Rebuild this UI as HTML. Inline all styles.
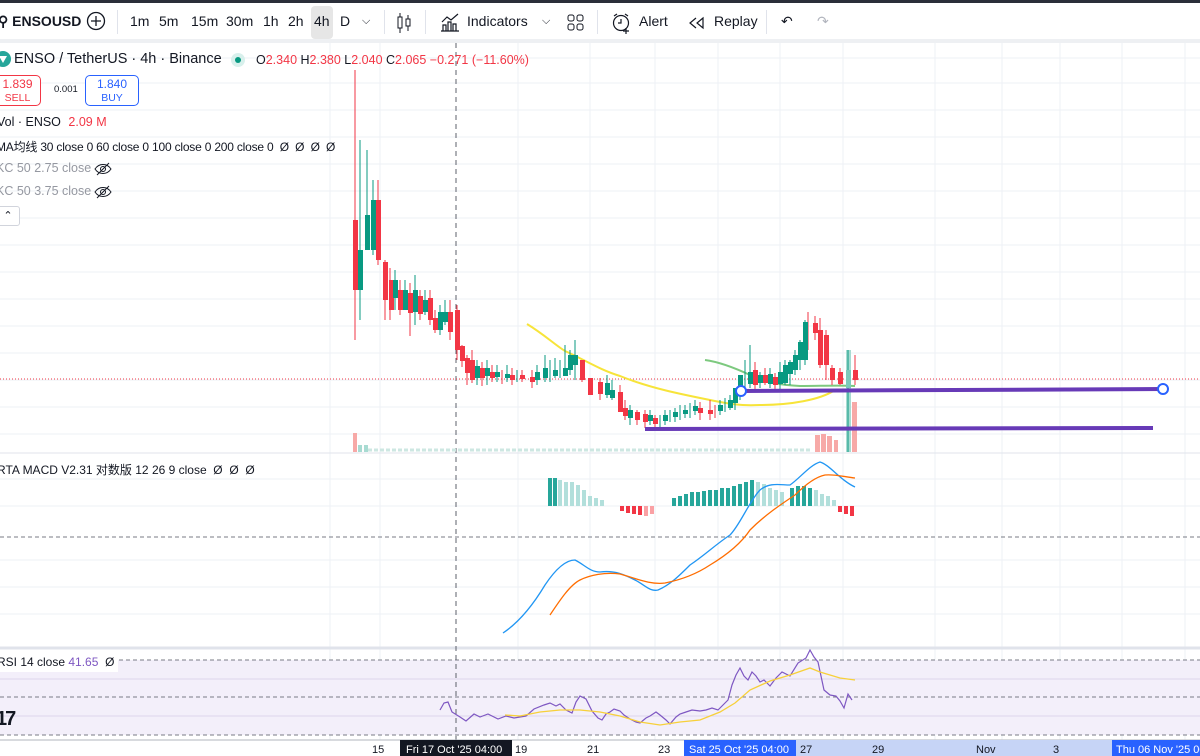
<!DOCTYPE html>
<html><head><meta charset="utf-8">
<style>
*{margin:0;padding:0;box-sizing:border-box}
body{width:1200px;height:756px;overflow:hidden;background:#fff;font-family:"Liberation Sans","Noto Sans CJK SC",sans-serif;color:#131722;position:relative}
.tb{position:absolute;left:0;top:0;width:1200px;height:39px;border-top:3px solid #2a2e39;background:#fff;font-size:14px}
.tb span{position:absolute;top:10px}
.sep{position:absolute;top:7px;width:1px;height:24px;background:#e0e3eb}
.gap{position:absolute;top:39px;left:0;width:1200px;height:4px;background:#eef0f3}
.t{position:absolute;font-size:13px;white-space:nowrap}
.g{color:#9598a1}
</style></head><body>
<div class="tb">
<span style="left:-2px;font-weight:bold">⚲ ENSOUSD</span>
<svg style="position:absolute;left:86px;top:8px" width="20" height="20"><circle cx="10" cy="10" r="8.5" fill="none" stroke="#131722" stroke-width="1.3"/><path d="M10 5v10M5 10h10" stroke="#131722" stroke-width="1.3"/></svg>
<div class="sep" style="left:117px"></div>
<span style="left:130px">1m</span><span style="left:159px">5m</span><span style="left:191px">15m</span><span style="left:226px">30m</span><span style="left:263px">1h</span><span style="left:288px">2h</span>
<div style="position:absolute;left:311px;top:3px;width:22px;height:33px;background:#e6e6e6;border-radius:4px"></div>
<span style="left:314px">4h</span><span style="left:340px">D</span><span style="left:362px;font-size:11px;top:12px">⌵</span>
<div class="sep" style="left:384px"></div>
<svg style="position:absolute;left:395px;top:9px" width="18" height="22"><rect x="3" y="5" width="4" height="11" fill="none" stroke="#131722"/><rect x="11" y="7" width="4" height="7" fill="none" stroke="#131722"/><path d="M5 1v4M5 16v5M13 3v4M13 14v5" stroke="#131722"/></svg>
<div class="sep" style="left:425px"></div>
<svg style="position:absolute;left:439px;top:9px" width="22" height="22"><path d="M2 19h18M4 19v-6h3v6M9 19v-9h3v9M14 19v-7h3v7M3 10l5-5 4 3 7-6" fill="none" stroke="#131722" stroke-width="1.2"/></svg>
<span style="left:467px">Indicators</span><span style="left:542px;font-size:11px;top:12px">⌵</span>
<svg style="position:absolute;left:567px;top:11px" width="18" height="18"><rect x="1" y="1" width="6" height="6" rx="2" fill="none" stroke="#131722"/><rect x="10" y="1" width="6" height="6" rx="2" fill="none" stroke="#131722"/><rect x="1" y="10" width="6" height="6" rx="2" fill="none" stroke="#131722"/><rect x="10" y="10" width="6" height="6" rx="2" fill="none" stroke="#131722"/></svg>
<div class="sep" style="left:597px"></div>
<svg style="position:absolute;left:611px;top:9px" width="22" height="22"><circle cx="10" cy="11" r="7.5" fill="none" stroke="#131722" stroke-width="1.2"/><path d="M10 7v4h-3M3 4l3-2M17 4l-3-2M15 16v6M12 19h6" fill="none" stroke="#131722" stroke-width="1.2"/></svg>
<span style="left:639px">Alert</span>
<svg style="position:absolute;left:688px;top:13px" width="18" height="14"><path d="M8 2L2 7l6 5M15 2L9 7l6 5V2z" fill="none" stroke="#131722" stroke-width="1.2"/></svg>
<span style="left:714px">Replay</span>
<div class="sep" style="left:766px"></div>
<span style="left:781px">↶</span><span style="left:817px;color:#b2b5be">↷</span>
</div>
<div class="gap"></div>

<svg style="position:absolute;left:0;top:43px" width="1200" height="713" viewBox="0 43 1200 713">
<g stroke="#eef1f6" stroke-width="1">
<path d="M0 58H1200M0 83H1200M0 110H1200M0 137H1200M0 164H1200M0 191H1200M0 218H1200M0 245H1200M0 272H1200M0 299H1200M0 326H1200M0 353H1200M0 380H1200M0 407H1200M0 434H1200M0 479H1200M0 506H1200M0 560H1200M0 587H1200M0 614H1200"/>
<path d="M330 43V740M380 43V740M518 43V740M590 43V740M655 43V740M718 43V740M780 43V740M843 43V740M935 43V740M1002 43V740M1060 43V740M1122 43V740M1185 43V740"/>
</g>
<rect x="0" y="660" width="1200" height="75" fill="#f3effa"/>
<path d="M0 660H1200M0 697H1200M0 735H1200" stroke="#787b86" stroke-dasharray="4 3" stroke-width="1"/>
<path d="M0 679H1200M0 716H1200" stroke="#dcd6ec"/>
<path d="M0 537H1200" stroke="#787b86" stroke-dasharray="4 3"/>
<path d="M0 453H1200" stroke="#e0e3eb"/>
<path d="M0 648H1200" stroke="#e0e3eb" stroke-width="3"/>
<path d="M456 43V740" stroke="#5d606b" stroke-dasharray="5 4"/>
<path d="M0 379H1200" stroke="#f23645" stroke-dasharray="1 2" stroke-width="1"/>
<g fill="#f7a9a7"><rect x="353" y="433" width="4" height="19"/><rect x="815" y="435" width="5" height="17"/><rect x="821" y="434" width="5" height="18"/><rect x="827" y="436" width="5" height="16"/><rect x="834" y="440" width="4" height="12"/><rect x="852" y="402" width="5" height="50"/></g>
<g fill="#a8dbd2"><rect x="358" y="445" width="4" height="7"/><rect x="364" y="445" width="4" height="7"/><rect x="846" y="350" width="5" height="102"/></g>
<path d="M368 450H812" stroke="#cde7e2" stroke-width="3" stroke-dasharray="4 2"/>
<path d="M527 324C545 335 555 345 565 351C585 360 600 370 620 376C650 388 680 394 710 400C730 404 740 406 760 405C790 405 820 400 835 390" fill="none" stroke="#f7e43a" stroke-width="2"/>
<path d="M705 360C720 362 735 368 750 375C765 382 780 385 800 386C820 386 840 385 855 386" fill="none" stroke="#7dc97f" stroke-width="2"/>
<g stroke="#f23645" stroke-width="1">
<path d="M355 70V340M378 180V265M385 260V320M390 268V320M400 280V315M410 283V336M420 290V320M430 290V325M435 310V333M450 300V340M457 305V360M462 345V367M467 355V385M472 350V383M482 362V386M492 365V382M502 370V384M512 368V385M522 370V382M532 370V388M582 362V382M590 378V395M600 378V400M620 385V412M625 400V420M637 410V425M645 410V428M655 415V428M700 402V420M710 400V420M715 405V418M755 362V390M765 368V385M775 373V390M808 312V350M815 316V340M820 318V368M826 330V380M832 365V385M840 368V385M855 355V385"/>
</g>
<g fill="#f23645">
<rect x="353" y="220" width="5" height="70"/><rect x="376" y="200" width="5" height="60"/><rect x="383" y="262" width="5" height="38"/><rect x="389" y="280" width="5" height="30"/><rect x="398" y="290" width="5" height="20"/><rect x="408" y="293" width="5" height="20"/><rect x="418" y="296" width="5" height="18"/><rect x="428" y="298" width="5" height="22"/><rect x="433" y="318" width="5" height="12"/><rect x="448" y="312" width="5" height="20"/><rect x="455" y="310" width="5" height="40"/><rect x="460" y="346" width="5" height="15"/><rect x="465" y="358" width="5" height="15"/><rect x="470" y="360" width="5" height="20"/><rect x="480" y="368" width="5" height="10"/><rect x="490" y="372" width="5" height="6"/><rect x="510" y="375" width="5" height="5"/><rect x="520" y="375" width="5" height="4"/><rect x="530" y="377" width="5" height="5"/><rect x="580" y="360" width="5" height="20"/><rect x="588" y="378" width="5" height="17"/><rect x="598" y="382" width="5" height="12"/><rect x="618" y="392" width="5" height="20"/><rect x="623" y="408" width="5" height="8"/><rect x="635" y="412" width="5" height="8"/><rect x="643" y="414" width="5" height="8"/><rect x="653" y="418" width="5" height="6"/><rect x="698" y="408" width="5" height="5"/><rect x="708" y="410" width="5" height="4"/><rect x="753" y="370" width="5" height="15"/><rect x="763" y="375" width="5" height="8"/><rect x="773" y="377" width="5" height="8"/><rect x="813" y="323" width="5" height="10"/><rect x="818" y="330" width="5" height="35"/><rect x="824" y="335" width="5" height="30"/><rect x="830" y="368" width="5" height="12"/><rect x="838" y="372" width="5" height="12"/><rect x="853" y="370" width="5" height="10"/>
</g>
<g stroke="#089981" stroke-width="1">
<path d="M360 140V320M367 150V250M373 180V255M395 270V310M405 280V310M415 275V325M425 290V315M440 305V335M445 300V325M477 360V385M487 360V385M497 365V382M507 365V382M517 370V382M537 365V385M545 355V382M550 360V382M555 358V378M560 360V378M565 345V375M570 350V375M575 340V380M607 375V398M612 380V400M630 405V425M650 410V425M660 415V428M665 410V425M670 410V422M675 408V422M680 405V420M685 405V418M690 403V418M695 400V415M720 400V415M725 398V412M730 395V410M735 390V410M740 375V400M745 360V395M750 345V388M760 372V388M770 368V388M780 362V390M785 360V385M790 360V385M795 350V375M800 340V370M805 320V365M848 350V452"/>
</g>
<g fill="#089981">
<rect x="358" y="250" width="5" height="40"/><rect x="365" y="215" width="5" height="35"/><rect x="371" y="200" width="5" height="50"/><rect x="393" y="280" width="5" height="18"/><rect x="403" y="290" width="5" height="20"/><rect x="413" y="290" width="5" height="22"/><rect x="423" y="300" width="5" height="12"/><rect x="438" y="312" width="5" height="18"/><rect x="443" y="312" width="5" height="10"/><rect x="475" y="366" width="5" height="12"/><rect x="485" y="368" width="5" height="8"/><rect x="495" y="372" width="5" height="5"/><rect x="505" y="374" width="5" height="4"/><rect x="535" y="372" width="5" height="8"/><rect x="543" y="368" width="5" height="10"/><rect x="553" y="370" width="5" height="6"/><rect x="563" y="368" width="5" height="8"/><rect x="568" y="355" width="5" height="15"/><rect x="573" y="355" width="5" height="10"/><rect x="605" y="383" width="5" height="12"/><rect x="610" y="390" width="5" height="8"/><rect x="628" y="410" width="5" height="8"/><rect x="648" y="415" width="5" height="6"/><rect x="663" y="415" width="5" height="6"/><rect x="673" y="412" width="5" height="5"/><rect x="683" y="410" width="5" height="4"/><rect x="693" y="406" width="5" height="5"/><rect x="718" y="405" width="5" height="6"/><rect x="728" y="400" width="5" height="8"/><rect x="733" y="388" width="5" height="15"/><rect x="738" y="375" width="5" height="15"/><rect x="748" y="372" width="5" height="12"/><rect x="758" y="375" width="5" height="8"/><rect x="768" y="374" width="5" height="10"/><rect x="778" y="372" width="5" height="12"/><rect x="783" y="365" width="5" height="18"/><rect x="788" y="362" width="5" height="12"/><rect x="793" y="355" width="5" height="15"/><rect x="798" y="342" width="5" height="18"/><rect x="803" y="322" width="5" height="38"/><rect x="846" y="370" width="5" height="18" fill="#7dc9bb"/>
</g>
<path d="M741 391L1163 389" stroke="#673ab7" stroke-width="4"/>
<circle cx="741" cy="391" r="5" fill="#fff" stroke="#2962ff" stroke-width="2"/>
<circle cx="1163" cy="389" r="5" fill="#fff" stroke="#2962ff" stroke-width="2"/>
<path d="M645 429L1153 428" stroke="#673ab7" stroke-width="4"/>
<g fill="#26a69a">
<rect x="548" y="478" width="4" height="28"/><rect x="553" y="478" width="4" height="28"/><rect x="672" y="498" width="4" height="8"/><rect x="678" y="496" width="4" height="10"/><rect x="684" y="494" width="4" height="12"/><rect x="690" y="492" width="4" height="14"/><rect x="696" y="492" width="4" height="14"/><rect x="702" y="491" width="4" height="15"/><rect x="708" y="490" width="4" height="16"/><rect x="714" y="490" width="4" height="16"/><rect x="720" y="488" width="4" height="18"/><rect x="726" y="488" width="4" height="18"/><rect x="732" y="486" width="4" height="20"/><rect x="738" y="484" width="4" height="22"/><rect x="744" y="482" width="4" height="24"/><rect x="750" y="480" width="4" height="26"/><rect x="790" y="488" width="4" height="18"/><rect x="796" y="486" width="4" height="20"/><rect x="802" y="486" width="4" height="20"/><rect x="808" y="488" width="4" height="18"/>
</g>
<g fill="#b2dfdb"><rect x="558" y="480" width="4" height="26"/><rect x="564" y="482" width="4" height="24"/><rect x="570" y="482" width="4" height="24"/><rect x="576" y="485" width="4" height="21"/><rect x="582" y="490" width="4" height="16"/><rect x="588" y="496" width="4" height="10"/><rect x="594" y="498" width="4" height="8"/><rect x="600" y="500" width="4" height="6"/><rect x="756" y="482" width="4" height="24"/><rect x="762" y="484" width="4" height="22"/><rect x="768" y="488" width="4" height="18"/><rect x="774" y="490" width="4" height="16"/><rect x="780" y="492" width="4" height="14"/><rect x="814" y="490" width="4" height="16"/><rect x="820" y="494" width="4" height="12"/><rect x="826" y="496" width="4" height="10"/><rect x="832" y="500" width="4" height="6"/></g>
<g fill="#f23645"><rect x="620" y="506" width="4" height="5"/><rect x="626" y="506" width="4" height="7"/><rect x="632" y="506" width="4" height="8"/><rect x="638" y="506" width="4" height="9"/><rect x="844" y="506" width="4" height="8"/><rect x="850" y="506" width="4" height="10"/><rect x="644" y="506" width="4" height="10" fill="#faa1a4"/><rect x="650" y="506" width="4" height="8" fill="#faa1a4"/><rect x="838" y="506" width="4" height="6"/></g>
<path d="M503 633C515 625 530 610 545 585C555 570 565 560 575 560C585 565 590 572 600 572C615 570 625 575 635 580C645 585 650 592 658 590C670 585 680 575 690 565C705 555 715 545 730 535C740 525 750 500 760 490C770 482 780 485 790 485C800 478 810 465 820 462C830 465 840 480 855 487" fill="none" stroke="#2196f3" stroke-width="1.3"/>
<path d="M550 615C560 600 570 585 580 580C590 575 605 572 620 574C635 578 650 585 665 583C680 580 695 575 710 565C725 556 740 545 750 530C765 515 780 505 795 495C805 485 815 477 825 475C835 474 845 477 855 478" fill="none" stroke="#ff6d00" stroke-width="1.3"/>
<path d="M440 710L444 703L448 702L452 712L460 717L466 721L474 714L480 717L488 714L498 719L506 716L514 718L520 717L526 716L534 709L544 705L550 703L556 706L560 704L566 710L572 713L576 702L580 696L586 699L592 711L598 718L602 720L606 714L610 712L614 709L620 711L624 715L630 719L636 722L640 723L646 718L650 716L656 712L660 715L666 720L670 724L676 717L680 714L686 712L692 710L700 711L706 710L712 708L718 710L722 706L728 700L732 685L736 675L740 668L744 676L748 680L752 672L756 676L760 682L764 680L770 686L776 678L782 672L790 676L798 663L806 658L810 650L814 657L818 662L824 690L830 695L836 696L840 701L844 708L848 694L852 700" fill="none" stroke="#7e57c2" stroke-width="1.2"/>
<path d="M505 715L520 716L540 712L560 710L580 710L600 712L620 716L640 722L660 725L680 722L700 720L720 712L735 703L750 690L770 681L790 675L810 668L820 672L840 678L855 680" fill="none" stroke="#f7d03a" stroke-width="1.3"/>
<rect x="0" y="740" width="1200" height="16" fill="#fff"/>
<path d="M0 740H1200" stroke="#b2b5be"/>
<rect x="400" y="740" width="112" height="16" fill="#131722"/>
<rect x="684" y="740" width="112" height="16" fill="#2962ff"/>
<rect x="796" y="740" width="316" height="16" fill="#c6d4f6"/>
<rect x="1112" y="740" width="88" height="16" fill="#2962ff"/>
<g font-size="11" font-family="Liberation Sans" fill="#131722">
<text x="372" y="753">15</text><text x="406" y="753" fill="#fff">Fri 17 Oct '25  04:00</text><text x="515" y="753">19</text><text x="587" y="753">21</text><text x="658" y="753">23</text><text x="689" y="753" fill="#fff">Sat 25 Oct '25  04:00</text><text x="800" y="753">27</text><text x="872" y="753">29</text><text x="976" y="753">Nov</text><text x="1053" y="753">3</text><text x="1116" y="753" fill="#fff">Thu 06 Nov '25  00</text>
</g>
</svg>

<svg style="position:absolute;left:-6px;top:50px" width="18" height="18"><circle cx="9" cy="9" r="8" fill="#26a69a"/><path d="M5 6h8l-4 7z" fill="#fff"/></svg>
<div class="t" style="left:14px;top:51px;font-size:14.5px;color:#131722">ENSO / TetherUS · 4h · Binance</div>
<div style="position:absolute;left:231px;top:53px;width:14px;height:14px;border-radius:50%;background:#d8f0ec"></div>
<div style="position:absolute;left:235px;top:57px;width:6px;height:6px;border-radius:50%;background:#089981"></div>
<div class="t" style="left:256px;top:53px;color:#f23645;font-size:12.5px"><span style="color:#131722">O</span>2.340 <span style="color:#131722">H</span>2.380 <span style="color:#131722">L</span>2.040 <span style="color:#131722">C</span>2.065 −0.271 (−11.60%)</div>
<div style="position:absolute;left:-6px;top:75px;width:47px;height:31px;border:1px solid #f23645;border-radius:5px;background:#fff;color:#f23645;text-align:center;font-size:12px;line-height:13px;padding-top:2px">1.839<br><span style="font-size:10.5px">SELL</span></div>
<div class="t" style="left:54px;top:84px;font-size:9.5px">0.001</div>
<div style="position:absolute;left:85px;top:75px;width:54px;height:31px;border:1px solid #2962ff;border-radius:5px;background:#fff;color:#2962ff;text-align:center;font-size:12px;line-height:13px;padding-top:2px">1.840<br><span style="font-size:10.5px">BUY</span></div>
<div class="t" style="left:-3px;top:115px;font-size:12.5px">Vol · ENSO <span style="color:#f23645;margin-left:4px">2.09 M</span></div>
<div class="t" style="left:-4px;top:138px;font-size:12px;letter-spacing:-0.2px">MA均线 30 close 0 60 close 0 100 close 0 200 close 0 &nbsp;Ø &nbsp;Ø &nbsp;Ø &nbsp;Ø</div>
<div class="t g" style="left:-4px;top:161px;font-size:12.5px">KC 50 2.75 close</div>
<div class="t g" style="left:-4px;top:184px;font-size:12.5px">KC 50 3.75 close</div>
<svg style="position:absolute;left:94px;top:161px" width="18" height="16"><path d="M1 8C5 2 13 2 17 8C13 14 5 14 1 8Z" fill="none" stroke="#131722"/><circle cx="9" cy="8" r="2.5" fill="none" stroke="#131722"/><path d="M3 14L15 2" stroke="#131722"/></svg>
<svg style="position:absolute;left:94px;top:184px" width="18" height="16"><path d="M1 8C5 2 13 2 17 8C13 14 5 14 1 8Z" fill="none" stroke="#131722"/><circle cx="9" cy="8" r="2.5" fill="none" stroke="#131722"/><path d="M3 14L15 2" stroke="#131722"/></svg>
<div style="position:absolute;left:-4px;top:206px;width:24px;height:20px;border:1px solid #d1d4dc;border-radius:3px;background:#fff;font-size:11px;text-align:center;line-height:18px">⌃</div>
<div class="t" style="left:-3px;top:461px;font-size:12px">RTA MACD V2.31 对数版 12 26 9 close &nbsp;Ø &nbsp;Ø &nbsp;Ø</div>
<div style="position:absolute;left:0;top:652px;width:118px;height:20px;background:#fff"></div>
<div class="t" style="left:-3px;top:655px;font-size:12px">RSI 14 close <span style="color:#7e57c2">41.65</span> &nbsp;Ø</div>
<div class="t" style="left:-4px;top:708px;font-size:20px;font-weight:bold;letter-spacing:-2px">17</div>
</body></html>
